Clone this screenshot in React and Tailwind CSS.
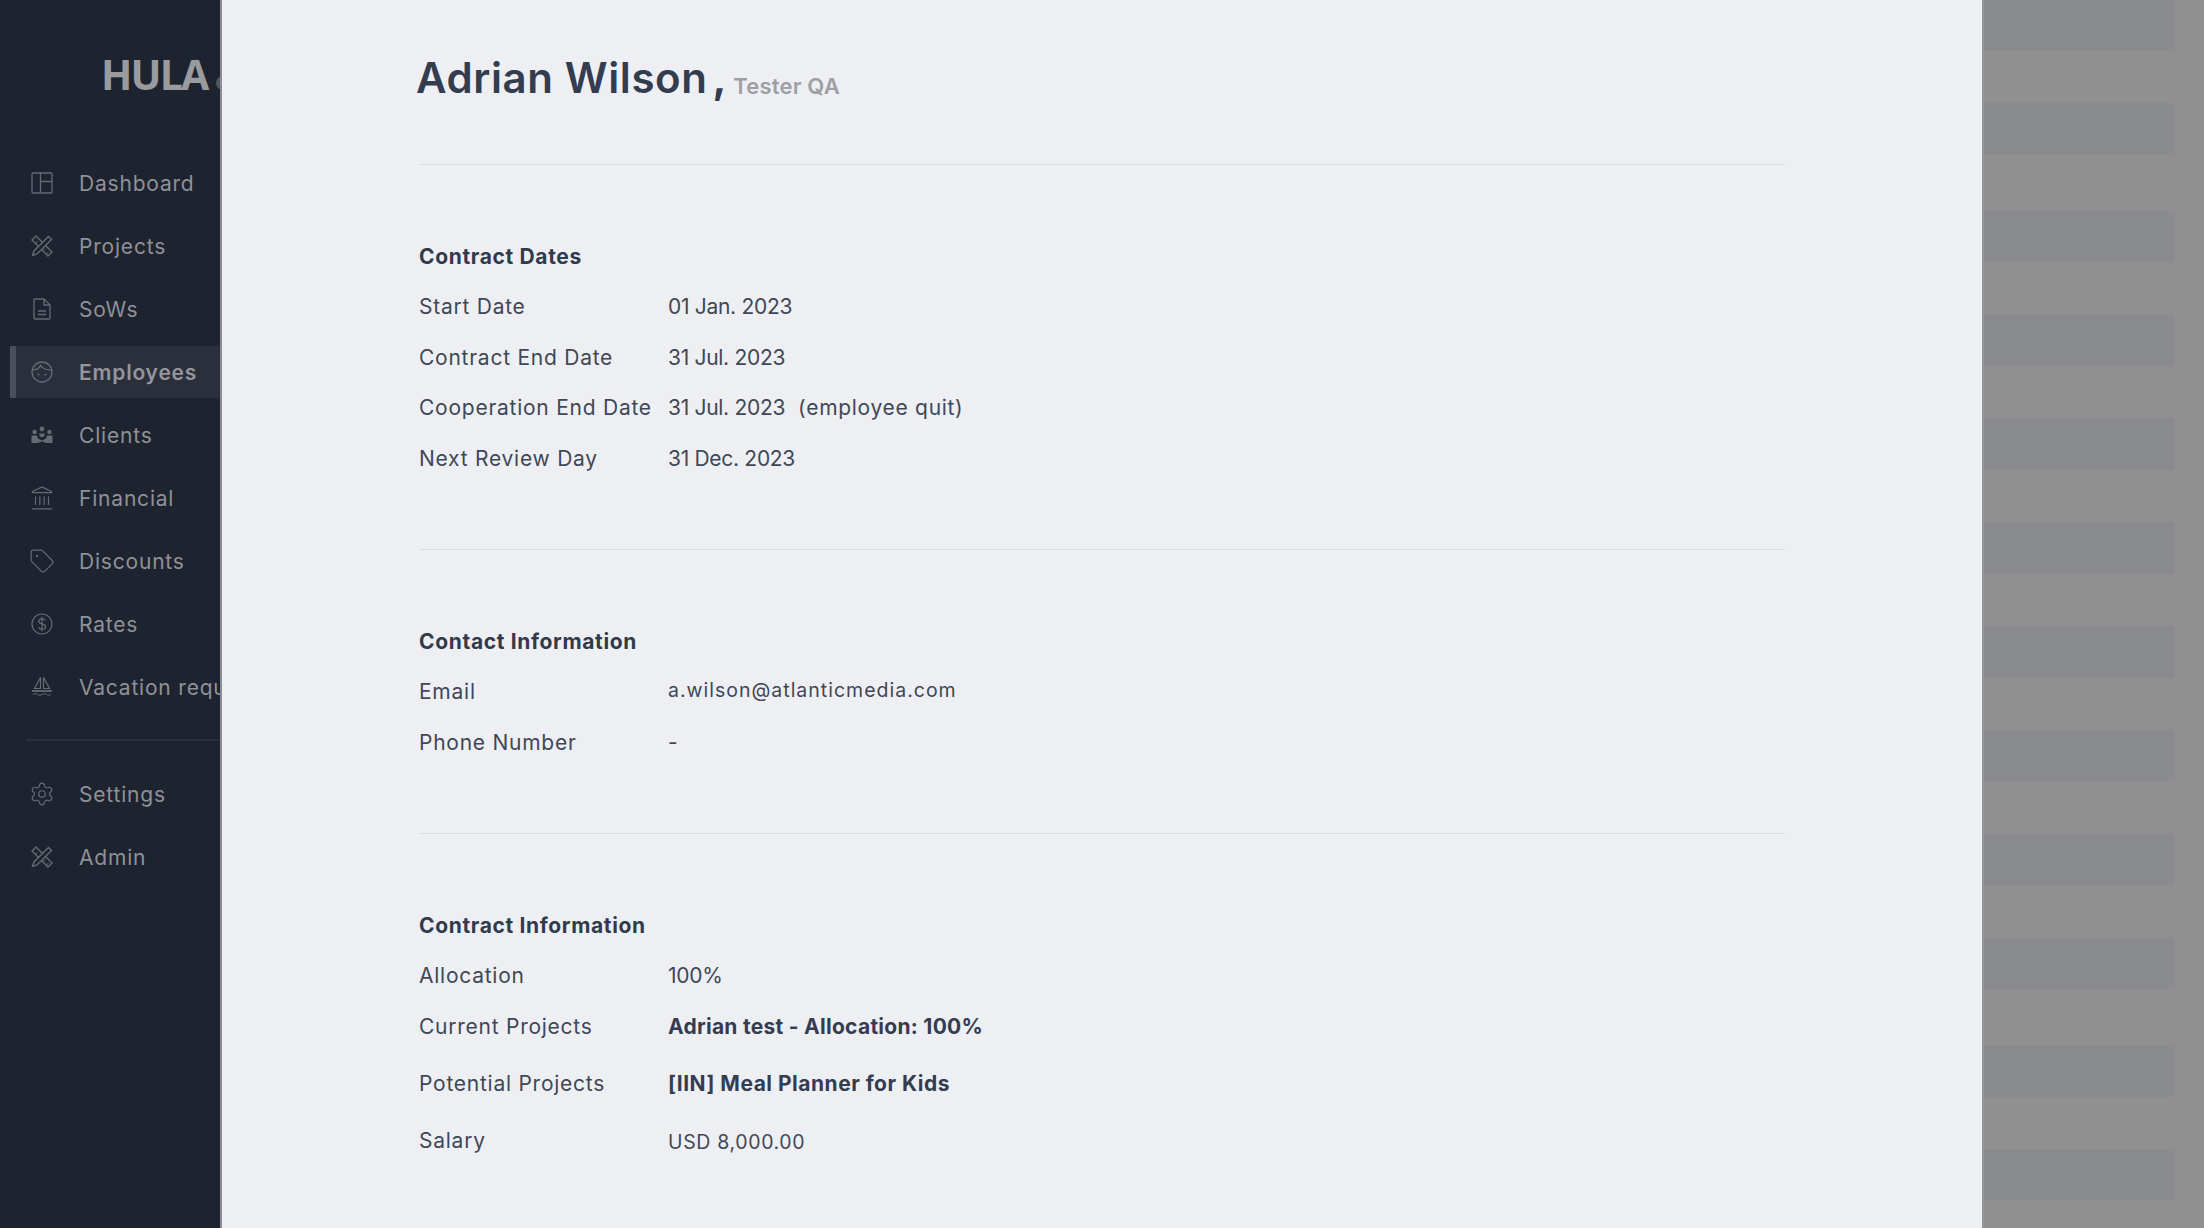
import React from "react";
import { Tag, Settings, Landmark } from "lucide-react";

const font = { fontFamily: "Inter, 'Open Sans', sans-serif" };

function DashboardIcon() {
  return (
    <svg width="22" height="22" viewBox="0 0 22 22" fill="none" stroke="currentColor" strokeWidth="1.3">
      <rect x="1" y="1" width="20" height="20" rx="1" />
      <path d="M9.5 1v20M9.5 9.5H21" />
    </svg>
  );
}

function ToolsIcon() {
  return (
    <svg width="22" height="22" viewBox="0 0 22 22" fill="none" stroke="currentColor" strokeWidth="1.4">
      <path d="M1 5l4-4 16 16-4 4z" />
      <path d="M4.500 8.500l2-2M8 12l2-2M12 15.500l2-2M15.500 19l2-2" strokeWidth="1" />
      <path d="M17.500 1.500l3 3L6 19l-4.500 1.500L3 16z" fill="#1e2330" />
    </svg>
  );
}

function FileIcon() {
  return (
    <svg width="22" height="22" viewBox="0 0 22 22" fill="none" stroke="currentColor" strokeWidth="1.3">
      <path d="M3 2a1 1 0 0 1 1-1h9l6 6v13a1 1 0 0 1-1 1H4a1 1 0 0 1-1-1z" />
      <path d="M13 1v6h6M7 13h8M7 16.500h8" />
    </svg>
  );
}

function FaceIcon() {
  return (
    <svg width="22" height="22" viewBox="0 0 22 22" fill="none" stroke="currentColor" strokeWidth="1.3">
      <circle cx="11" cy="11" r="10" />
      <path d="M1.500 9c3.500 0 6.500-1 8-4.500 1.500 2.500 5 4.500 11 4.500" />
      <circle cx="7.500" cy="13.500" r="1" fill="currentColor" stroke="none" />
      <circle cx="14.500" cy="13.500" r="1" fill="currentColor" stroke="none" />
    </svg>
  );
}

function ClientsIcon() {
  return (
    <svg width="22" height="22" viewBox="0 0 22 22" fill="currentColor">
      <circle cx="11" cy="5" r="2.400" />
      <circle cx="3.600" cy="8" r="2.200" />
      <circle cx="18.400" cy="8" r="2.200" />
      <path d="M0.500 11.500h5.500l1 3 4 2 4-2 1-3h5.500V19h-6l-4.500-1.500L6.500 19h-6z" />
      <path d="M8 9.500h6l-1 3-2 1-2-1z" />
    </svg>
  );
}

function DollarIcon() {
  return (
    <svg width="22" height="22" viewBox="0 0 22 22" fill="none" stroke="currentColor" strokeWidth="1.2">
      <circle cx="11" cy="11" r="10" />
      <path d="M14.300 7.500c-.7-1.200-1.900-1.800-3.300-1.800-1.900 0-3.400 1-3.400 2.600 0 3.600 7 1.700 7 5.300 0 1.600-1.600 2.700-3.500 2.700-1.500 0-2.800-.7-3.500-1.900M11 3.700v14.600" />
    </svg>
  );
}

function SailIcon() {
  return (
    <svg width="22" height="22" viewBox="0 0 22 22" fill="none" stroke="currentColor" strokeWidth="1.2">
      <path d="M9.500 1.500 3.500 12.500h6zM12.500 1.500v11h6z" />
      <path d="M1 15h20" strokeWidth="1.800" />
      <path d="M2 18.500c1.500-1 3-1 4.500 0s3 1 4.500 0 3-1 4.500 0 3 1 4.500 0" strokeWidth="1" />
    </svg>
  );
}

const lucideProps = { size: 26, strokeWidth: 1.1, className: "ml-[-2px]" };

const navItems = [
  { label: "Dashboard", icon: <DashboardIcon /> },
  { label: "Projects", icon: <ToolsIcon /> },
  { label: "SoWs", icon: <FileIcon /> },
  { label: "Employees", icon: <FaceIcon />, active: true },
  { label: "Clients", icon: <ClientsIcon /> },
  { label: "Financial", icon: <Landmark {...lucideProps} /> },
  { label: "Discounts", icon: <Tag {...lucideProps} /> },
  { label: "Rates", icon: <DollarIcon /> },
  { label: "Vacation requests", icon: <SailIcon /> },
];

const bottomItems = [
  { label: "Settings", icon: <Settings {...lucideProps} /> },
  { label: "Admin", icon: <ToolsIcon /> },
];

// gaps between the dimmed table rows behind the overlay are not even
const bands = [
  "h-[51px]",
  "h-[52px] mt-[52px] rounded-r-sm",
  "h-[52px] mt-[56px]",
  "h-[52px] mt-[52px] rounded-r-sm",
  "h-[52px] mt-[51px]",
  "h-[52px] mt-[52px]",
  "h-[52px] mt-[52px]",
  "h-[52px] mt-[51px]",
  "h-[52px] mt-[52px] rounded-r-sm",
  "h-[52px] mt-[52px]",
  "h-[52px] mt-[56px] rounded-r-sm",
  "h-[51px] mt-[52px]",
];

function NavItem({ item }) {
  return (
    <div
      className={`flex h-[52px] items-center whitespace-nowrap text-[21px] tracking-[0.8px] ${
        item.active ? "ml-[10px] border-l-[6px] border-[#4a4f5c] bg-[#2a2f3b] pl-[15px] font-semibold text-[#94969b]" : "pl-[31px] text-[#8f9197]"
      }`}
    >
      <span className="flex w-[48px] shrink-0 text-[#666a73]">{item.icon}</span>
      <span className="pt-[2px]">{item.label}</span>
    </div>
  );
}

function Row({ label, children, className = "h-[50.5px]" }) {
  return (
    <div className={`flex items-center pt-[1px] text-[21px] tracking-[0.75px] text-[#3f4756] ${className}`}>
      <div className="w-[249px] shrink-0">{label}</div>
      {children}
    </div>
  );
}

function Section({ title, children }) {
  return (
    <section className="border-t border-[#dcdde2] pt-[66px] pb-[66px]">
      <h3 className="flex h-[50px] items-center pt-[1px] text-[21px] font-bold tracking-[0.65px] text-[#303a4c]">{title}</h3>
      {children}
    </section>
  );
}

function DateValue({ children }) {
  return <span className="tracking-[-0.3px]">{children}</span>;
}

export default function App() {
  return (
    <div className="flex h-screen overflow-hidden bg-[#eeeff3]" style={font}>
      <aside className="h-full w-[222px] shrink-0 overflow-hidden border-r-2 border-[#8a8d94] bg-[#1e2330]">
        <div className="flex h-[157px] items-center pl-[101px] pb-[8px]">
          <span className="text-[41px] font-bold leading-none tracking-[-1.8px] text-[#9a9b9f]" style={{ fontFamily: "'Open Sans', sans-serif" }}>
            HULA
          </span>
          <span className="mt-[16px] ml-[8px] h-[14px] w-[14px] shrink-0 rounded-full bg-[#525765]" />
        </div>
        <nav className="flex flex-col gap-[11px]">
          {navItems.map((item) => (
            <NavItem key={item.label} item={item} />
          ))}
        </nav>
        <div className="mt-[26px] mb-[27px] ml-[26px] border-t-2 border-[#2a2f3b]" />
        <nav className="flex flex-col gap-[11px]">
          {bottomItems.map((item) => (
            <NavItem key={item.label} item={item} />
          ))}
        </nav>
      </aside>

      <main className="flex-1 overflow-hidden pr-[197px] pl-[196px]">
        <header className="flex h-[164px] items-start pt-[51px] whitespace-nowrap">
          <h1 className="ml-[-2px] text-[42px] leading-[54px] font-semibold tracking-[0.6px] text-[#343d50]">
            Adrian Wilson<span className="ml-[5px] font-bold">,</span>
          </h1>
          <span className="mt-[19px] ml-[6px] text-[22px] font-semibold tracking-[0.2px] text-[#9d9fa5]">Tester QA</span>
        </header>

        <div className="pl-[1px]">
          <Section title="Contract Dates">
            <Row label="Start Date"><DateValue>01 Jan. 2023</DateValue></Row>
            <Row label="Contract End Date"><DateValue>31 Jul. 2023</DateValue></Row>
            <Row label="Cooperation End Date">
              <DateValue>31 Jul. 2023</DateValue>
              <span className="ml-[13px] tracking-[0.7px]">(employee quit)</span>
            </Row>
            <Row label="Next Review Day"><DateValue>31 Dec. 2023</DateValue></Row>
          </Section>

          <Section title="Contact Information">
            <Row label="Email">
              <span className="mt-[-3px] text-[19.5px] tracking-[1px]">a.wilson@atlanticmedia.com</span>
            </Row>
            <Row label="Phone Number">-</Row>
          </Section>

          <Section title="Contract Information">
            <Row label="Allocation"><DateValue>100%</DateValue></Row>
            <Row label="Current Projects">
              <span className="font-bold tracking-[0.27px] text-[#343d50]">Adrian test - Allocation: 100%</span>
            </Row>
            <Row label="Potential Projects" className="mt-[7px] h-[50.5px]">
              <span className="font-bold tracking-[0.5px] text-[#343d50]">[IIN] Meal Planner for Kids</span>
            </Row>
            <Row label="Salary" className="mt-[6px] h-[50.5px]">
              <span className="mt-[5px] text-[19.5px] tracking-[0.65px]">USD 8,000.00</span>
            </Row>
          </Section>
        </div>
      </main>

      <div className="h-full w-[222px] shrink-0 border-l-2 border-[#94959a] bg-[#909091] pr-[29px]">
        {bands.map((cls, i) => (
          <div key={i} className={`bg-[#8a8b8e] ${cls}`} />
        ))}
      </div>
    </div>
  );
}
